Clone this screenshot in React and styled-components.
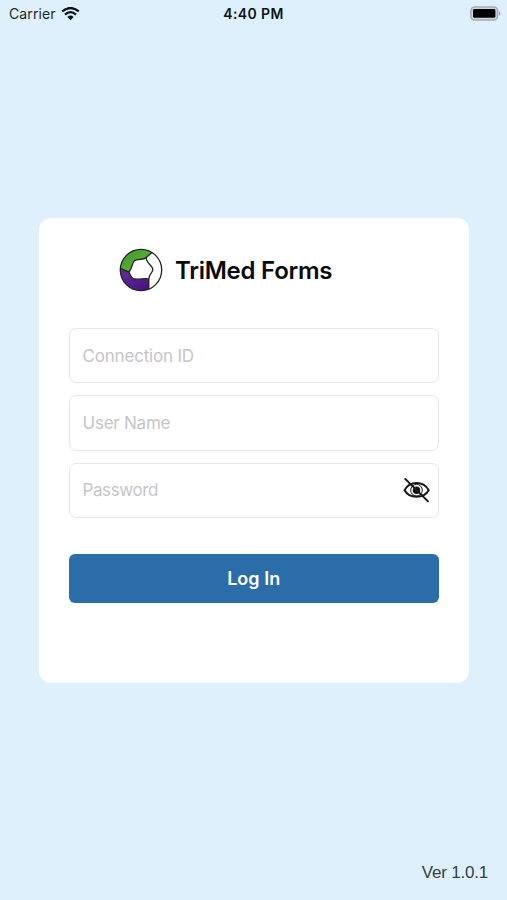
import React from 'react';
import styled, { createGlobalStyle } from 'styled-components';

const GlobalStyle = createGlobalStyle`
  *, *::before, *::after { box-sizing: border-box; }
  body { margin: 0; background: #def0fb; overflow: hidden; }
  body, input, button { font-family: Inter, "Liberation Sans", sans-serif; }
`;

const Screen = styled.main`
  height: 900px;
  display: flex;
  flex-direction: column;
  background: #def0fb;
`;

const StatusBar = styled.header`
  height: 28px;
  padding: 0 6px 0 9px;
  display: grid;
  grid-template-columns: 1fr auto 1fr;
  align-items: center;
  font-size: 14px;
  line-height: 28px;
  color: #1c262d;
`;

const Carrier = styled.div`
  display: flex;
  align-items: center;
  gap: 5px;
  letter-spacing: 0.12px;
`;

const Time = styled.time`
  margin-right: 3px;
  font-weight: 600;
  font-size: 14px;
  letter-spacing: 0.4px;
  color: #0c1318;
`;

const Battery = styled.svg`
  justify-self: end;
  display: block;
  margin-bottom: 2px;
`;

const Card = styled.form`
  width: 430px;
  height: 465px;
  margin: 190px 0 0 39px;
  padding: 29px 30.5px 0 30px;
  border-radius: 12px;
  background: #fff;
`;

const Brand = styled.div`
  height: 46px;
  display: flex;
  align-items: center;
  gap: 12px;
  padding-left: 50px;
`;

const Title = styled.h1`
  margin: 0;
  padding-top: 2px;
  font-size: 24px;
  line-height: 32px;
  font-weight: 600;
  letter-spacing: -0.26px;
  color: #0a0a0a;
  white-space: nowrap;
`;

const Fields = styled.div`
  margin-top: 35px;
  display: flex;
  flex-direction: column;
  gap: 12px;
`;

const Field = styled.label`
  height: 55.4px;
  display: flex;
  align-items: center;
  padding: 0 8px 0 12.5px;
  border: 1px solid #e7e7e8;
  border-radius: 7px;
  background: #fff;
`;

const Input = styled.input`
  flex: 1;
  min-width: 0;
  padding: 0;
  border: 0;
  outline: 0;
  background: transparent;
  font-size: 17px;
  line-height: 24px;
  letter-spacing: ${({ $tracking }) => $tracking}px;
  &::placeholder { color: #c5c5c7; opacity: 1; }
`;

const RevealButton = styled.button`
  display: flex;
  padding: 0;
  border: 0;
  background: none;
`;

const LoginButton = styled.button`
  width: 100%;
  height: 49px;
  margin-top: 36px;
  padding: 0;
  border: 0;
  border-radius: 6px;
  background: #2b6da8;
  color: #fff;
  font-size: 18px;
  font-weight: 600;
  letter-spacing: 0.05px;
`;

const Version = styled.footer`
  margin: auto 19px 15px auto;
  font-family: "Liberation Sans", sans-serif;
  font-size: 17px;
  line-height: 24px;
  letter-spacing: -0.2px;
  color: #334149;
`;

const Wifi = () => (
  <svg width="19" height="15" viewBox="0 0 19 15" fill="none" stroke="#0b1116" strokeWidth="2.3">
    <path d="M1.2 4.4Q9.5 -2.3 17.8 4.4" />
    <path d="M4 7.6Q9.5 2.7 15 7.6" />
    <path d="M6.4 10Q9.5 7.1 12.6 10L9.5 13.3Z" fill="#0b1116" stroke="none" />
  </svg>
);

const BatteryIcon = () => (
  <Battery width="31" height="15" viewBox="0 0 31 15">
    <rect x="0.9" y="0.9" width="26.6" height="13" rx="3.6" fill="#d0d8de" stroke="#a5adb3" strokeWidth="1.5" />
    <rect x="3" y="3" width="22.4" height="8.8" rx="1.4" fill="#000" />
    <path d="M28.8 5Q32 7.4 28.8 9.8Z" fill="#9ca5ab" />
  </Battery>
);

const Logo = () => (
  <svg width="44" height="44" viewBox="0 0 44 44">
    <defs>
      <linearGradient id="leaf" x1="0" y1="0" x2="1" y2="1">
        <stop offset="0" stopColor="#3f9429" />
        <stop offset="1" stopColor="#65bd42" />
      </linearGradient>
      <linearGradient id="violet" x1="0" y1="0" x2="1" y2="1">
        <stop offset="0" stopColor="#63309a" />
        <stop offset="1" stopColor="#470f80" />
      </linearGradient>
    </defs>
    <circle cx="22" cy="22" r="20.7" fill="#fff" />
    <path d="M1.3 20.3A20.7 20.7 0 0 1 33 4.4L27.3 9.6C24 12 19 10.8 15.5 12.6C13 15 13.4 20.2 9.8 24.2Z" fill="url(#leaf)" />
    <path d="M1.3 20.3L9.8 24.2C11.5 26.2 11.4 29.4 14.3 30.7C19 32 26 29.8 29.8 31V41.2A20.7 20.7 0 0 1 1.3 20.3Z" fill="url(#violet)" />
    <g fill="none" stroke="#202020" strokeWidth="1.3" strokeLinejoin="round">
      <circle cx="22" cy="22" r="20.7" />
      <path d="M1.3 20.3L9.8 24.2C13.4 20.2 13 15 15.5 12.6C19 10.8 24 12 27.3 9.6L33 4.4" />
      <path d="M9.8 24.2C11.5 26.2 11.4 29.4 14.3 30.7C19 32 26 29.8 29.8 31V41.2" />
      <path d="M27.3 9.6C26.5 14.5 33.6 17.5 33.8 21.3C34 25 29.8 26 29.8 31" />
    </g>
  </svg>
);

const HiddenEye = () => (
  <svg width="27" height="27" viewBox="0 0 27 27" fill="none" stroke="#171717">
    <path d="M1.6 13.2C6.2 3.6 20.8 3.6 25.7 13.2C20.8 21.9 6.2 21.9 1.6 13.2Z" strokeWidth="2" />
    <circle cx="13.5" cy="13.2" r="5.8" strokeWidth="1" />
    <circle cx="13.5" cy="13.2" r="3.7" fill="#111" stroke="none" />
    <circle cx="11.7" cy="11.3" r="1" fill="#aaa" stroke="none" />
    <path d="M1.7 1.4L25.5 24.9" strokeWidth="2" />
  </svg>
);

export default function App() {
  return (
    <>
      <GlobalStyle />
      <Screen>
        <StatusBar>
          <Carrier>Carrier <Wifi /></Carrier>
          <Time>4:40 PM</Time>
          <BatteryIcon />
        </StatusBar>
        <Card onSubmit={(event) => event.preventDefault()}>
          <Brand>
            <Logo />
            <Title>TriMed Forms</Title>
          </Brand>
          <Fields>
            <Field><Input aria-label="Connection ID" placeholder="Connection ID" $tracking={-0.19} /></Field>
            <Field><Input aria-label="User Name" placeholder="User Name" $tracking={-0.24} /></Field>
            <Field>
              <Input type="password" aria-label="Password" placeholder="Password" $tracking={-0.4} />
              <RevealButton type="button" aria-label="Show password"><HiddenEye /></RevealButton>
            </Field>
          </Fields>
          <LoginButton type="submit">Log In</LoginButton>
        </Card>
        <Version>Ver 1.0.1</Version>
      </Screen>
    </>
  );
}
